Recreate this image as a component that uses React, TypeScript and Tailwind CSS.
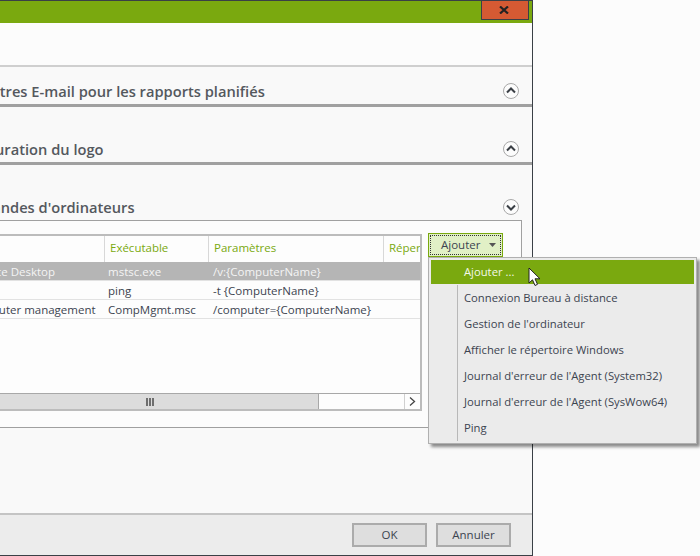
const font = { fontFamily: '"Open Sans", "Noto Sans", sans-serif' };

function Chevron({ up }: { up: boolean }) {
  return (
    <svg width="16" height="16" viewBox="0 0 16 16" className="block">
      <circle cx="8" cy="8" r="7.5" fill="#fcfcfc" stroke="#a8a8a8" />
      <path d={up ? "M4 9.5 L8 5.5 L12 9.5" : "M4 6.5 L8 10.5 L12 6.5"} fill="none" stroke="#3a3f45" strokeWidth="2" />
    </svg>
  );
}

function Section({ title, offset, up, line }: { title: string; offset: string; up: boolean; line: string }) {
  return (
    <div className={`flex h-[58px] items-end justify-between pr-[11px] pb-0 ${line}`}>
      <span className={`whitespace-nowrap pb-[3px] text-[14.67px] leading-[20px] font-semibold text-[#54585e] ${offset}`}>{title}</span>
      <div className="mb-[5px] mr-[2px]"><Chevron up={up} /></div>
    </div>
  );
}

const rows = [
  { a: "Remote Desktop", aOff: "-ml-[34px]", b: "mstsc.exe", c: "/v:{ComputerName}", sel: true },
  { a: "", aOff: "", b: "ping", c: "-t {ComputerName}", sel: false },
  { a: "Computer management", aOff: "-ml-[33px]", b: "CompMgmt.msc", c: "/computer={ComputerName}", sel: false },
];

const menu = [
  "Connexion Bureau à distance",
  "Gestion de l'ordinateur",
  "Afficher le répertoire Windows",
  "Journal d'erreur de l'Agent (System32)",
  "Journal d'erreur de l'Agent (SysWow64)",
  "Ping",
];

export default function App() {
  return (
    <div style={font} className="relative h-[556px] w-[700px] overflow-hidden bg-[#fcfcfc] text-[11.5px] text-[#3c4450]">
      <div className="flex h-[556px] w-[533px] flex-col border-t border-r border-b border-[#3a4046] bg-[#fcfcfc]">
        <div className="flex h-[22px] shrink-0 items-start justify-end bg-[#7aa90f] pr-[3px]">
          <div className="flex h-[19px] w-[48px] items-center justify-center border-x border-b border-[#3a4046] bg-[#d55a33] pr-[2px]">
            <svg width="10" height="8" viewBox="0 0 10 8"><path d="M1 0.5 L9 7.5 M9 0.5 L1 7.5" fill="none" stroke="#222" strokeWidth="2.2" /></svg>
          </div>
        </div>
        <div className="h-[44px] shrink-0 border-b-2 border-[#cfcfcf] bg-[#fcfcfc]" />
        <div className="min-h-0 flex-1 bg-[#f9f9f9]">
          <Section title="Paramètres E-mail pour les rapports planifiés" offset="-ml-[55px]" up line="mt-[-18px] border-b-[3px] border-[#a0a0a0]" />
          <Section title="Configuration du logo" offset="-ml-[50px]" up line="border-b-[3px] border-[#a0a0a0]" />
          <div className="flex h-[55px] items-end justify-between pr-[11px]">
            <span className="-ml-[54px] whitespace-nowrap pb-[3px] text-[14.67px] leading-[20px] font-semibold text-[#54585e]">Commandes d'ordinateurs</span>
            <div className="mb-[5px] mr-[2px]"><Chevron up={false} /></div>
          </div>
          <div className="mr-[10px] flex h-[208px] items-start border border-l-0 border-[#a0a0a0] bg-[#fcfcfc] pt-[13px]">
            <div className="flex h-[177px] w-[422px] shrink-0 flex-col border-y-2 border-r-2 border-[#bcbcbc] bg-[#fdfdfd]">
              <div className="flex h-[26px] shrink-0 text-[#7aa90f]">
                <div className="w-[104px] shrink-0" />
                <div className="w-[104px] shrink-0 border-l border-[#d8d8d8] pl-[5px] pt-[4px] leading-[16px]">Exécutable</div>
                <div className="w-[175px] shrink-0 border-l border-[#d8d8d8] pl-[5px] pt-[4px] leading-[16px]">Paramètres</div>
                <div className="flex-1 overflow-hidden whitespace-nowrap border-l border-[#d8d8d8] pl-[5px] pt-[4px] leading-[16px]">Répertoire</div>
              </div>
              {rows.map((r) => (
                <div key={r.b} className={`flex h-[19px] shrink-0 items-center whitespace-nowrap border-b border-[#e2e2e2] pt-[1px] ${r.sel ? "bg-[#b5b5b5] text-[#f4f4f4]" : ""}`}>
                  <div className="w-[104px] shrink-0 overflow-hidden"><span className={`block ${r.aOff}`}>{r.a}</span></div>
                  <div className="w-[104px] shrink-0 pl-[4px]">{r.b}</div>
                  <div className="w-[175px] shrink-0 pl-[5px]">{r.c}</div>
                </div>
              ))}
              <div className="flex-1" />
              <div className="flex h-[16px] shrink-0 border-t border-[#a8a8a8]">
                <div className="flex w-[318px] shrink-0 items-center justify-center bg-[#dcdcdc]">
                  <svg width="8" height="8" viewBox="0 0 8 8" className="ml-[-18px]"><path d="M0 0h2v8H0zM3 0h2v8H3zM6 0h2v8H6z" fill="#6e6e6e" /></svg>
                </div>
                <div className="flex-1 border-l border-[#a8a8a8]" />
                <div className="flex w-[16px] shrink-0 items-center justify-center border-l border-[#d0d0d0]">
                  <svg width="7" height="9" viewBox="0 0 7 9"><path d="M1 .5 L5.5 4.5 L1 8.5" fill="none" stroke="#444" strokeWidth="1.3" /></svg>
                </div>
              </div>
            </div>
            <div className="ml-[6px] mt-[-1px] h-[24px] w-[75px] shrink-0 border border-[#7aa90f] bg-[#e1f0c6] p-[1px]">
              <div className="flex h-full items-center justify-between border border-dotted border-[#333] pl-[10px] pr-[4px] text-[11.5px] leading-none">
                <span>Ajouter</span>
                <svg width="7" height="4" viewBox="0 0 7 4"><path d="M0 0h7L3.5 4z" fill="#555" /></svg>
              </div>
            </div>
          </div>
        </div>
        <div className="flex h-[42px] shrink-0 justify-end gap-[9px] border-t-2 border-[#c4c4c4] bg-[#ececec] pr-[21px] pt-[8px]">
          <div className="flex h-[24px] w-[75px] items-center justify-center border-2 border-[#ababab] bg-[#dedede] text-[11.5px]">OK</div>
          <div className="flex h-[24px] w-[75px] items-center justify-center border-2 border-[#ababab] bg-[#dedede] text-[11.5px]">Annuler</div>
        </div>
      </div>

      <div className="absolute left-[428px] top-[257px] h-[187px] w-[269px] border border-[#b0b0b0] bg-[#ebebeb] p-[2px] text-[11.25px] text-[#3c4450] shadow-[3px_3px_3px_rgba(0,0,0,0.45)]">
        <div className="flex h-[24px] items-center bg-[#7aa90f] pl-[33px] text-[#f4f8ea]">Ajouter ...</div>
        <div className="ml-[26px] mt-[1px] border-l border-[#b8b8b8]">
          {menu.map((m) => (
            <div key={m} className="flex h-[26px] items-center whitespace-nowrap pl-[6px]">{m}</div>
          ))}
        </div>
      </div>

      <svg className="absolute left-[528px] top-[267px]" width="14" height="21" viewBox="0 0 14 21">
        <path d="M1 1 V16 L4.5 12.8 L7 18.5 L9.5 17.3 L7 11.8 H12 Z" fill="#fff" stroke="#222" strokeWidth="1" />
      </svg>
    </div>
  );
}
